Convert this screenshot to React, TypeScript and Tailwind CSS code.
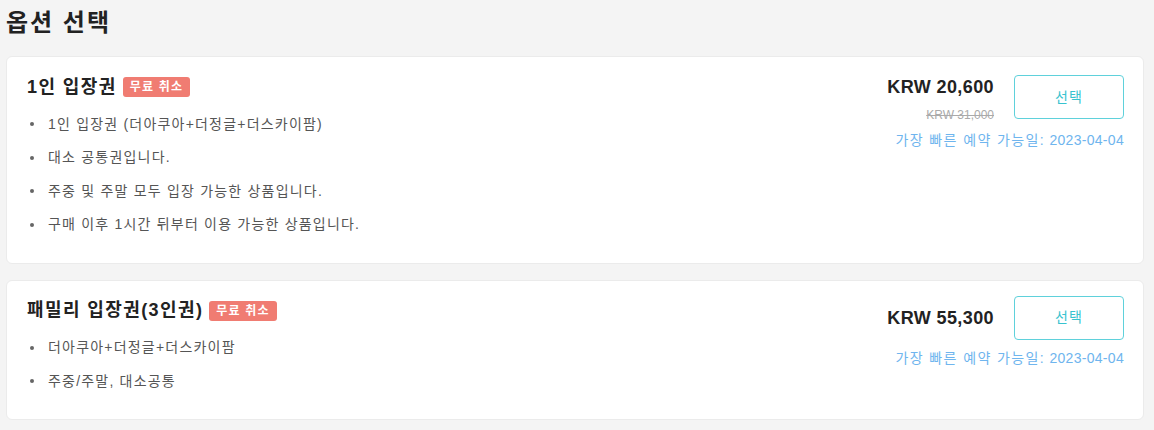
import React from "react";

type Option = {
  title: string;
  price: string;
  original?: string;
  date: string;
  items: string[];
};

const options: Option[] = [
  {
    title: "1인 입장권",
    price: "KRW 20,600",
    original: "KRW 31,000",
    date: "2023-04-04",
    items: [
      "1인 입장권 (더아쿠아+더정글+더스카이팜)",
      "대소 공통권입니다.",
      "주중 및 주말 모두 입장 가능한 상품입니다.",
      "구매 이후 1시간 뒤부터 이용 가능한 상품입니다.",
    ],
  },
  {
    title: "패밀리 입장권(3인권)",
    price: "KRW 55,300",
    date: "2023-04-04",
    items: ["더아쿠아+더정글+더스카이팜", "주중/주말, 대소공통"],
  },
];

function OptionCard({ option }: { option: Option }) {
  return (
    <section className="flex justify-between rounded-[6px] border border-[#ebebeb] bg-white pt-[15px] pb-[28px] pl-[20px] pr-[19px]">
      <div>
        <div className="flex h-[30px] items-center">
          <h3 className="text-[18px] font-bold tracking-[1.4px] text-[#222]">{option.title}</h3>
          <span className="ml-[6px] flex h-[20px] items-center rounded-[3px] bg-[#f07c72] px-[7px] text-[12px] font-bold tracking-[1.2px] text-white">
            무료 취소
          </span>
        </div>
        <ul className="mt-[12px] flex flex-col gap-[13.5px]">
          {option.items.map((item) => (
            <li key={item} className="flex h-[20px] items-center text-[14px] tracking-[1.2px] text-[#555]">
              <span className="ml-[3px] mr-[14px] h-[4px] w-[4px] rounded-full bg-[#666]" />
              {item}
            </li>
          ))}
        </ul>
      </div>
      <div className="flex flex-col items-end">
        <div className="flex items-center gap-[20px]">
          <div className="flex flex-col items-end">
            <span className="text-[18px] font-bold leading-[30px] tracking-[0.4px] text-[#222]">
              {option.price}
            </span>
            {option.original && (
              <span className="mt-[6px] text-[12px] leading-[14px] text-[#aaa] line-through">
                {option.original}
              </span>
            )}
          </div>
          <button
            type="button"
            className="h-[44px] w-[110px] rounded-[4px] border border-[#5fd1db] bg-white text-[14px] tracking-[1px] text-[#38c3cf]"
          >
            선택
          </button>
        </div>
        <p className="mt-[8px] text-[14px] leading-[20px] text-[#6fb5ee]">
          <span className="tracking-[1.4px]">가장 빠른 예약 가능일:</span>
          <span className="tracking-[0.3px]"> {option.date}</span>
        </p>
      </div>
    </section>
  );
}

export default function App() {
  return (
    <div
      className="min-h-[430px] bg-[#f4f4f4] pl-[6px] pr-[10px] pt-[7px]"
      style={{ fontFamily: '"Liberation Sans", "Noto Sans CJK KR", sans-serif' }}
    >
      <h2 className="text-[24px] font-bold leading-[32px] tracking-[2px] text-[#222]">옵션 선택</h2>
      <div className="mt-[17px] flex flex-col gap-[16px]">
        {options.map((o) => (
          <OptionCard key={o.title} option={o} />
        ))}
      </div>
    </div>
  );
}
